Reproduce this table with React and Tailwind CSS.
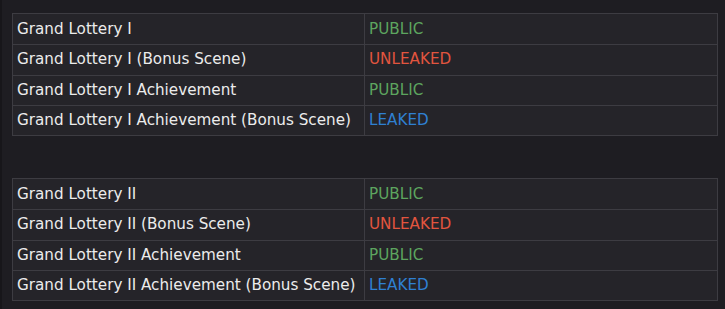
import React from 'react';

const groups = [
  [
    ['Grand Lottery I', 'PUBLIC'],
    ['Grand Lottery I (Bonus Scene)', 'UNLEAKED'],
    ['Grand Lottery I Achievement', 'PUBLIC'],
    ['Grand Lottery I Achievement (Bonus Scene)', 'LEAKED'],
  ],
  [
    ['Grand Lottery II', 'PUBLIC'],
    ['Grand Lottery II (Bonus Scene)', 'UNLEAKED'],
    ['Grand Lottery II Achievement', 'PUBLIC'],
    ['Grand Lottery II Achievement (Bonus Scene)', 'LEAKED'],
  ],
];

const statusColor = {
  PUBLIC: 'text-[#5da55f]',
  UNLEAKED: 'text-[#e2553f]',
  LEAKED: 'text-[#2f80d2]',
};

const StatusTable = ({ rows }) => (
  <div className="border border-[#3d3c42] bg-[#252429]">
    {rows.map(([name, status], i) => (
      <div
        key={name}
        className={`grid grid-cols-[352px_1fr] h-[30.25px] ${i > 0 ? 'border-t border-[#3d3c42]' : ''}`}
      >
        <div className="border-r border-[#3d3c42] pl-1 flex items-center text-[#ececec]">{name}</div>
        <div className={`pl-1 flex items-center ${statusColor[status]}`}>{status}</div>
      </div>
    ))}
  </div>
);

export default function App() {
  return (
    <div className="w-[725px] h-[309px] bg-[#1e1d22] border-l-2 border-[#17161a] font-['DejaVu_Sans',sans-serif] text-[15.2px] overflow-hidden">
      <div className="pt-[13px] pl-[10px] w-[716px] flex flex-col gap-[42px]">
        {groups.map((rows, i) => (
          <StatusTable key={i} rows={rows} />
        ))}
      </div>
    </div>
  );
}
